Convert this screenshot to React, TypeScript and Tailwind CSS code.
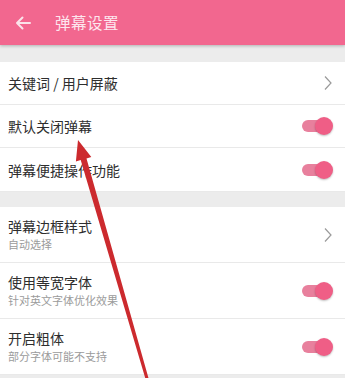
import React from 'react';

const font = { fontFamily: '"Noto Sans CJK SC", "Noto Sans", sans-serif' };

function Chevron() {
  return (
    <svg width="10" height="16" viewBox="0 0 10 16" className="shrink-0">
      <path d="M2 1.5 L8 8 L2 14.5" fill="none" stroke="#9a9a9a" strokeWidth="1.2" />
    </svg>
  );
}

function Toggle() {
  return (
    <div className="relative w-[31px] h-[18px] shrink-0 flex items-center">
      <div className="w-[27px] h-[12px] rounded-full bg-[#e8809d]" />
      <div className="absolute right-0 top-0 w-[18px] h-[18px] rounded-full bg-[#ef5e86] shadow-[0_1px_2px_rgba(0,0,0,0.25)]" />
    </div>
  );
}

function Row({ title, sub, right, last }: { title: string; sub?: string; right: 'chevron' | 'toggle'; last?: boolean }) {
  return (
    <div className={`flex items-center justify-between pl-2 pr-[12px] bg-white ${sub ? 'h-[56px]' : 'h-[43px]'} ${last ? '' : 'border-b border-[#e9e9e9]'}`}>
      <div className="flex flex-col">
        <span className="text-[14px] leading-[18px] text-[#2e2e2e]">{title}</span>
        {sub && <span className="text-[11px] leading-[15px] mt-[2px] text-[#9b9b9b]">{sub}</span>}
      </div>
      {right === 'chevron' ? <Chevron /> : <Toggle />}
    </div>
  );
}

export default function App() {
  return (
    <div className="relative w-[345px] h-[378px] overflow-hidden bg-[#ececec]" style={font}>
      <div className="h-[45px] bg-[#f2678f] flex items-center shadow-[0_1px_3px_rgba(0,0,0,0.25)]">
        <svg width="18" height="16" viewBox="0 0 18 16" className="ml-[14px]">
          <path d="M16 8 H3 M8.5 2.5 L3 8 L8.5 13.5" fill="none" stroke="#fbe3ea" strokeWidth="2" strokeLinecap="round" strokeLinejoin="round" />
        </svg>
        <span className="ml-[23px] text-[15.5px] text-[#fde6ee] tracking-[0.5px]">弹幕设置</span>
      </div>

      <div className="mt-[17px] border-b border-[#e9e9e9] bg-white">
        <div className="flex flex-col">
          <Row title="关键词 / 用户屏蔽" right="chevron" />
          <Row title="默认关闭弹幕" right="toggle" />
          <Row title="弹幕便捷操作功能" right="toggle" last />
        </div>
      </div>

      <div className="mt-[15px] bg-white flex flex-col">
        <Row title="弹幕边框样式" sub="自动选择" right="chevron" />
        <Row title="使用等宽字体" sub="针对英文字体优化效果" right="toggle" />
        <Row title="开启粗体" sub="部分字体可能不支持" right="toggle" />
      </div>

      <svg className="absolute inset-0 pointer-events-none" width="345" height="378" viewBox="0 0 345 378">
        <polygon
          points="78,140 91.3,157 86.5,158.4 149.6,382 146.4,382 80.7,160 75.9,161.4"
          fill="#cc2a2e"
        />
      </svg>
    </div>
  );
}
